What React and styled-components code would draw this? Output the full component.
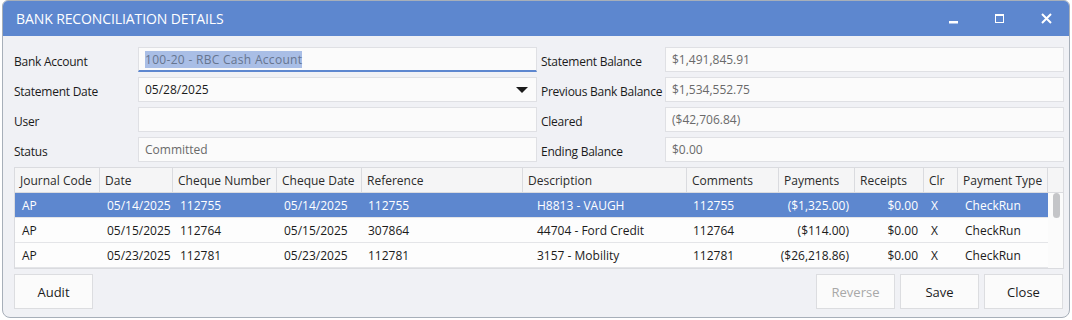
import React from 'react';
import styled, { createGlobalStyle, css } from 'styled-components';

const GlobalStyle = createGlobalStyle`
  body {
    margin: 0;
    background: #ffffff;
    font-family: "Open Sans", "Noto Sans", "Liberation Sans", sans-serif;
  }
`;

const Window = styled.div`
  box-sizing: border-box;
  width: 1068px;
  height: 318px;
  margin-left: 2px;
  border: 1px solid #a7afb9;
  border-radius: 6px 6px 8px 8px;
  overflow: hidden;
  background: #f0f1f5;
  display: flex;
  flex-direction: column;
`;

const TitleBar = styled.div`
  height: 35px;
  flex-shrink: 0;
  background: #5d87cf;
  color: #fff;
  display: flex;
  align-items: center;
  padding-left: 13px;
  font-size: 14px;
`;

const Title = styled.span`
  letter-spacing: -0.1px;
`;

const Controls = styled.div`
  margin-left: auto;
  display: flex;
  align-items: center;
  height: 100%;
`;

const ControlButton = styled.div`
  width: 46px;
  height: 100%;
  display: flex;
  align-items: center;
  justify-content: center;
`;

const Content = styled.div`
  flex: 1;
  padding: 11px 5px 9px 11px;
  display: flex;
  flex-direction: column;
`;

const Form = styled.div`
  display: grid;
  grid-template-columns: 124px 399px 128px 399px;
  grid-auto-rows: 25px;
  row-gap: 5px;
  font-size: 12px;
`;

const Label = styled.div`
  display: flex;
  align-items: center;
  padding-left: ${(p) => (p.$right ? '4px' : '0')};
  padding-top: 3px;
  color: #1b1b1b;
  white-space: nowrap;
  letter-spacing: -0.25px;
`;

const Field = styled.div`
  box-sizing: border-box;
  position: relative;
  display: flex;
  align-items: center;
  padding: 0 6px;
  background: #fbfbfb;
  border: 1px solid #dfe0e4;
  color: ${(p) => (p.$muted ? '#6a6a6a' : '#1b1b1b')};
  ${(p) =>
    p.$focused &&
    css`
      border-bottom: 2px solid #5d87cf;
      padding-top: 1px;
    `}
`;

const Selected = styled.span`
  background: #a9bee6;
  color: #66758f;
  line-height: 17px;
  letter-spacing: 0.3px;
`;

const Caret = styled.span`
  position: absolute;
  right: 8px;
  top: 9px;
  width: 0;
  height: 0;
  border-left: 6px solid transparent;
  border-right: 6px solid transparent;
  border-top: 6px solid #1b1b1b;
`;

const COLUMNS = '85px 73px 104px 85px 161px 164px 92px 76px 69px 34px 90px';

const Table = styled.div`
  margin-top: 5px;
  border: 1px solid #dadbdf;
  background: #fdfdfd;
  font-size: 12px;
`;

const HeaderRow = styled.div`
  display: grid;
  grid-template-columns: ${COLUMNS} 1fr;
  height: 24px;
  background: #f5f5f6;
  border-bottom: 1px solid #dadbdf;
  color: #2b2b2b;
`;

const HeaderCell = styled.div`
  display: flex;
  align-items: center;
  padding-left: 5px;
  white-space: nowrap;
  border-right: ${(p) => (p.$last ? 'none' : '1px solid #dadbdf')};
`;

const Body = styled.div`
  display: flex;
`;

const Rows = styled.div`
  flex: 1;
`;

const Row = styled.div`
  display: grid;
  grid-template-columns: ${COLUMNS};
  height: 24px;
  border-bottom: 1px solid #e4e5e8;
  background: ${(p) => (p.$selected ? '#5d87cf' : '#fdfdfd')};
  color: ${(p) => (p.$selected ? '#ffffff' : '#1b1b1b')};
`;

const Cell = styled.div`
  display: flex;
  align-items: center;
  justify-content: ${(p) => (p.$align === 'right' ? 'flex-end' : 'flex-start')};
  padding: 0 6px 0 ${(p) => p.$indent || 7}px;
  white-space: nowrap;
  overflow: hidden;
`;

const ScrollTrack = styled.div`
  width: 17px;
  background: #fbfbfb;
  display: flex;
  justify-content: flex-end;
  padding-right: 3px;
  box-sizing: border-box;
`;

const Thumb = styled.div`
  width: 7px;
  height: 25px;
  border-radius: 4px;
  background: #c4c5c8;
`;

const Footer = styled.div`
  margin-top: 5px;
  display: flex;
  gap: 5px;
  padding-right: 1px;
`;

const Spacer = styled.div`
  flex: 1;
`;

const Button = styled.button`
  width: 79px;
  height: 35px;
  background: #fbfbfb;
  border: 1px solid #dcdde0;
  border-radius: 0;
  font-family: inherit;
  font-size: 13px;
  color: ${(p) => (p.disabled ? '#a8a8a8' : '#1b1b1b')};
  padding: 0;
`;

const rows = [
  ['AP', '05/14/2025', '112755', '05/14/2025', '112755', 'H8813 - VAUGH', '112755', '($1,325.00)', '$0.00', 'X', 'CheckRun'],
  ['AP', '05/15/2025', '112764', '05/15/2025', '307864', '44704 - Ford Credit', '112764', '($114.00)', '$0.00', 'X', 'CheckRun'],
  ['AP', '05/23/2025', '112781', '05/23/2025', '112781', '3157 - Mobility', '112781', '($26,218.86)', '$0.00', 'X', 'CheckRun'],
];

const headers = ['Journal Code', 'Date', 'Cheque Number', 'Cheque Date', 'Reference', 'Description', 'Comments', 'Payments', 'Receipts', 'Clr', 'Payment Type'];

function MinimizeIcon() {
  return (
    <svg width="10" height="10" viewBox="0 0 10 10">
      <rect x="0" y="7" width="9" height="2.5" fill="#fff" />
    </svg>
  );
}

function MaximizeIcon() {
  return (
    <svg width="10" height="10" viewBox="0 0 10 10">
      <rect x="0.5" y="0.5" width="8" height="8" fill="none" stroke="#fff" strokeWidth="1" />
      <rect x="0" y="0" width="9" height="2" fill="#fff" />
    </svg>
  );
}

function CloseIcon() {
  return (
    <svg width="11" height="11" viewBox="0 0 11 11">
      <path d="M1 1 L10 10 M10 1 L1 10" stroke="#fff" strokeWidth="2" />
    </svg>
  );
}

export default function App() {
  return (
    <>
      <GlobalStyle />
      <Window>
        <TitleBar>
          <Title>BANK RECONCILIATION DETAILS</Title>
          <Controls>
            <ControlButton><MinimizeIcon /></ControlButton>
            <ControlButton><MaximizeIcon /></ControlButton>
            <ControlButton><CloseIcon /></ControlButton>
          </Controls>
        </TitleBar>

        <Content>
          <Form>
            <Label>Bank Account</Label>
            <Field $focused><Selected>100-20 - RBC Cash Account</Selected></Field>
            <Label $right>Statement Balance</Label>
            <Field $muted>$1,491,845.91</Field>

            <Label>Statement Date</Label>
            <Field>05/28/2025<Caret /></Field>
            <Label $right>Previous Bank Balance</Label>
            <Field $muted>$1,534,552.75</Field>

            <Label>User</Label>
            <Field />
            <Label $right>Cleared</Label>
            <Field $muted>($42,706.84)</Field>

            <Label>Status</Label>
            <Field $muted>Committed</Field>
            <Label $right>Ending Balance</Label>
            <Field $muted>$0.00</Field>
          </Form>

          <Table>
            <HeaderRow>
              {headers.map((h) => (
                <HeaderCell key={h}>{h}</HeaderCell>
              ))}
              <HeaderCell $last />
            </HeaderRow>
            <Body>
              <Rows>
                {rows.map((r, i) => (
                  <Row key={i} $selected={i === 0}>
                    {r.map((v, j) => (
                      <Cell
                        key={j}
                        $align={j === 7 || j === 8 ? 'right' : 'left'}
                        $indent={j === 5 ? 14 : j === 4 || j === 6 ? 6 : 7}
                      >
                        {v}
                      </Cell>
                    ))}
                  </Row>
                ))}
              </Rows>
              <ScrollTrack>
                <Thumb />
              </ScrollTrack>
            </Body>
          </Table>

          <Footer>
            <Button>Audit</Button>
            <Spacer />
            <Button disabled>Reverse</Button>
            <Button>Save</Button>
            <Button>Close</Button>
          </Footer>
        </Content>
      </Window>
    </>
  );
}
